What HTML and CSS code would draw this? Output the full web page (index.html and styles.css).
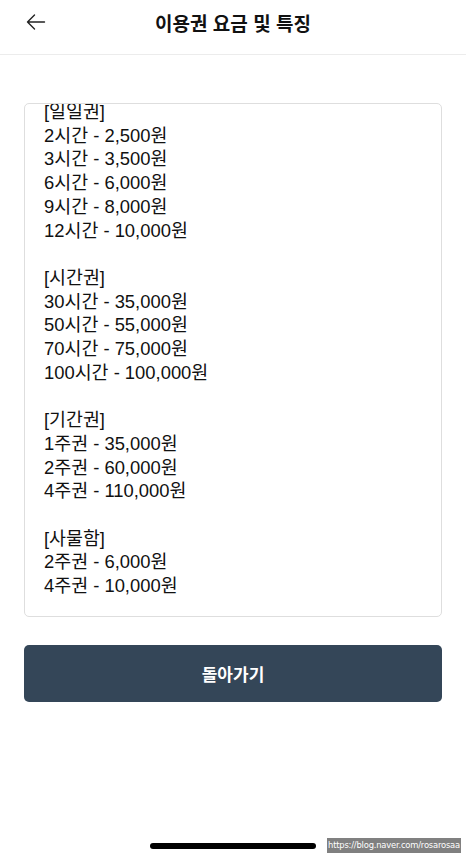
FILE: index.html
```html
<!DOCTYPE html>
<html lang="ko">
<head>
<meta charset="utf-8">
<link rel="stylesheet" href="styles.css">
</head>
<body>
<div class="screen">
  <header class="header">
    <button class="back" aria-label="뒤로">
      <svg width="20" height="16" viewBox="0 0 20 16" fill="none" stroke="#222" stroke-width="1.4" stroke-linecap="round" stroke-linejoin="round">
        <path d="M18.5 8H1.5M8.5 1L1.5 8l7 7"/>
      </svg>
    </button>
    <h1 class="title">이용권 요금 및 특징</h1>
  </header>
  <main class="content">
    <div class="textbox">
      <div class="text">[일일권]
2시간 - 2,500원
3시간 - 3,500원
6시간 - 6,000원
9시간 - 8,000원
12시간 - 10,000원

[시간권]
30시간 - 35,000원
50시간 - 55,000원
70시간 - 75,000원
100시간 - 100,000원

[기간권]
1주권 - 35,000원
2주권 - 60,000원
4주권 - 110,000원

[사물함]
2주권 - 6,000원
4주권 - 10,000원</div>
    </div>
    <button class="primary">돌아가기</button>
  </main>
  <footer class="footer">
    <div class="home-bar"></div>
    <div class="watermark">https://blog.naver.com/rosarosaa</div>
  </footer>
</div>
</body>
</html>
```
FILE: styles.css
```css
html, body {
  margin: 0;
  padding: 0;
  background: #fff;
}
body {
  font-family: "Liberation Sans", "Noto Sans CJK KR", sans-serif;
  color: #111;
}
.screen {
  width: 466px;
  height: 858px;
  display: flex;
  flex-direction: column;
  overflow: hidden;
}
.header {
  height: 54px;
  border-bottom: 1px solid #ececec;
  display: flex;
  align-items: center;
  justify-content: center;
  position: relative;
}
.back {
  position: absolute;
  left: 25px;
  top: 13px;
  border: 0;
  background: none;
  padding: 0;
  width: 22px;
  height: 18px;
  display: flex;
  align-items: center;
  justify-content: center;
}
.title {
  margin: 0 0 9px 0;
  font-family: "Noto Sans CJK KR", sans-serif;
  font-size: 19px;
  font-weight: 700;
  color: #111;
}
.content {
  padding: 48px 24px 0 24px;
  display: flex;
  flex-direction: column;
  gap: 28px;
}
.textbox {
  height: 512px;
  border: 1px solid #dedede;
  border-radius: 5px;
  overflow: hidden;
  padding: 0 19px;
}
.text {
  margin-top: -4px;
  white-space: pre;
  font-size: 18.4px;
  line-height: 23.7px;
  color: #111;
}
.primary {
  height: 57px;
  border: 0;
  border-radius: 5px;
  background: #344658;
  color: #fff;
  font-family: "Noto Sans CJK KR", sans-serif;
  font-size: 17px;
  font-weight: 700;
  padding: 0;
}
.footer {
  margin-top: auto;
  height: 32px;
  position: relative;
}
.home-bar {
  margin: 17px 0 0 150px;
  width: 166px;
  height: 6px;
  border-radius: 3px;
  background: #000;
}
.watermark {
  position: absolute;
  left: 327px;
  top: 12px;
  width: 134px;
  height: 15px;
  background: #808080;
  color: #fff;
  font-family: "DejaVu Sans", sans-serif;
  font-size: 8.4px;
  line-height: 15px;
  text-align: center;
  white-space: nowrap;
  letter-spacing: -0.2px;
}
```
